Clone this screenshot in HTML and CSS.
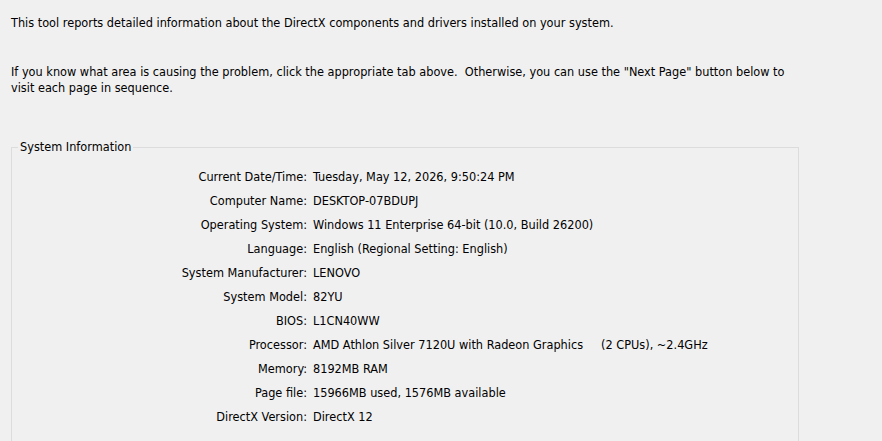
FILE: index.html
```html
<!DOCTYPE html>
<html>
<head>
<meta charset="utf-8">
<link rel="stylesheet" href="styles.css">
</head>
<body>
<div class="page">
  <p class="intro">This tool reports detailed information about the DirectX components and drivers installed on your system.</p>
  <p class="hint">If you know what area is causing the problem, click the appropriate tab above.&nbsp; Otherwise, you can use the "Next Page" button below to visit each page in sequence.</p>
  <fieldset class="group">
    <legend class="group-title">System Information</legend>
    <div class="info">
      <div class="label">Current Date/Time:</div><div class="value">Tuesday, May 12, 2026, 9:50:24 PM</div>
      <div class="label">Computer Name:</div><div class="value">DESKTOP-07BDUPJ</div>
      <div class="label">Operating System:</div><div class="value">Windows 11 Enterprise 64-bit (10.0, Build 26200)</div>
      <div class="label">Language:</div><div class="value">English (Regional Setting: English)</div>
      <div class="label">System Manufacturer:</div><div class="value">LENOVO</div>
      <div class="label">System Model:</div><div class="value">82YU</div>
      <div class="label">BIOS:</div><div class="value">L1CN40WW</div>
      <div class="label">Processor:</div><div class="value">AMD Athlon Silver 7120U with Radeon Graphics     (2 CPUs), ~2.4GHz</div>
      <div class="label">Memory:</div><div class="value">8192MB RAM</div>
      <div class="label">Page file:</div><div class="value">15966MB used, 1576MB available</div>
      <div class="label">DirectX Version:</div><div class="value">DirectX 12</div>
    </div>
  </fieldset>
</div>
</body>
</html>
```
FILE: styles.css
```css
html, body {
  margin: 0;
  padding: 0;
  background: #f0f0f0;
}
body {
  font-family: "DejaVu Sans Condensed", "DejaVu Sans", sans-serif;
  font-size: 12.6px;
  color: #000;
  overflow: hidden;
  height: 441px;
}
.page {
  padding: 15px 0 0 11px;
}
.intro {
  margin: 0;
  line-height: 16px;
}
.hint {
  margin: 33px 0 0 0;
  width: 790px;
  line-height: 16px;
}
.group {
  box-sizing: border-box;
  width: 788px;
  margin: 43px 0 0 0;
  padding: 0 0 20px 0;
  border: 1px solid #dcdcdc;
  min-inline-size: 0;
}
.group-title {
  margin-left: 6px;
  padding: 0 2px;
  line-height: 16px;
}
.info {
  display: grid;
  grid-template-columns: 295px 1fr;
  column-gap: 6px;
  padding-top: 10px;
}
.label, .value {
  line-height: 24px;
  white-space: pre;
}
.label {
  text-align: right;
}
```
